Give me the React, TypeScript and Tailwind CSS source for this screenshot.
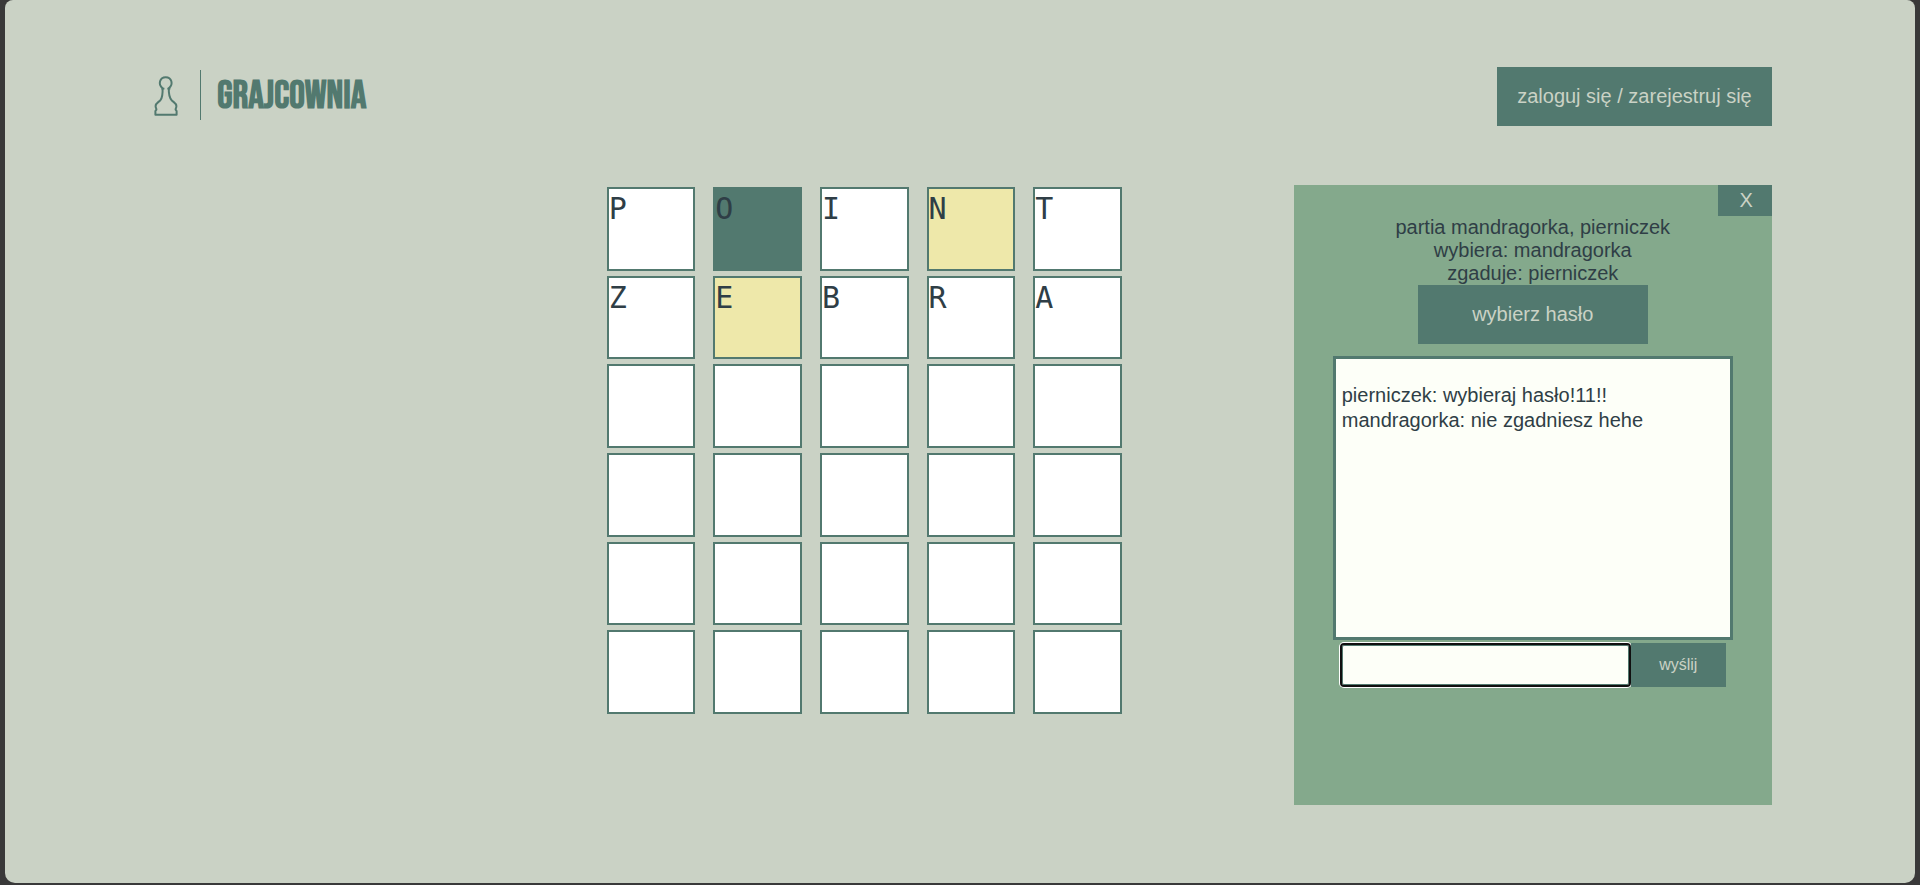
import React from "react";

type Mark = "plain" | "hit" | "near";
type Cell = { letter: string; mark: Mark };

const cell = (letter = "", mark: Mark = "plain"): Cell => ({ letter, mark });

const board: Cell[] = [
  cell("P"), cell("O", "hit"), cell("I"), cell("N", "near"), cell("T"),
  cell("Z"), cell("E", "near"), cell("B"), cell("R"), cell("A"),
  ...Array.from({ length: 20 }, () => cell()),
];

const markClass: Record<Mark, string> = {
  plain: "bg-white",
  hit: "bg-[#52796f]",
  near: "bg-[#eee8aa]",
};

const messages = [
  { author: "pierniczek", text: "wybieraj hasło!11!!" },
  { author: "mandragorka", text: "nie zgadniesz hehe" },
];

function Logo() {
  return (
    <a href="#" className="flex items-center pb-[4px] text-[#52796f]">
      <svg
        className="mt-[2px] ml-[6px] h-[40px] w-[24px]"
        viewBox="0 0 24 40"
        fill="none"
        stroke="currentColor"
        strokeWidth="2"
        strokeLinejoin="round"
        aria-hidden="true"
      >
        <path d="M8.6 12.2 C3.6 8.5 5.8 1.2 11.7 1.2 C17.6 1.2 19.8 8.5 14.8 12.2 C14.6 18 15.5 21.5 17.6 24.2 C20 26.5 22.4 27.5 22.4 30 C22.4 32 21.6 32.2 21.6 33.6 L22.6 35 V38.8 H1.4 V35 L2.4 33.6 C2.4 32.2 1.6 32 1.6 30 C1.6 27.5 4 26.5 6.4 24.2 C8.5 21.5 8.8 18 8.6 12.2 Z" />
        <path d="M7.4 12.6 H10.4 M13.4 12.6 H16.4" strokeWidth="1.6" />
      </svg>
      <span className="ml-[22px] h-[50px] w-px bg-[#52796f]" />
      <span className="ml-[16px] pt-[4px] font-['Bebas_Neue','Liberation_Sans_Narrow','Roboto_Condensed',sans-serif] text-[39px] leading-[44px] font-bold">
        GRAJCOWNIA
      </span>
    </a>
  );
}

function Board() {
  return (
    <div className="grid h-[527px] w-[515px] grid-cols-5 grid-rows-6 gap-x-[18px] gap-y-[5px]">
      {board.map(({ letter, mark }, i) => (
        <div
          key={i}
          className={`border-2 border-[#52796f] font-['DejaVu_Sans_Mono',monospace] text-[30px] leading-[40px] ${markClass[mark]}`}
        >
          {letter}
        </div>
      ))}
    </div>
  );
}

function GamePanel() {
  return (
    <aside className="flex h-[620px] w-[478px] flex-col items-center bg-[#84a98c]">
      <button aria-label="Zamknij" className="h-[31px] w-[54px] self-end bg-[#52796f] pb-px pl-[3px] text-[20px] leading-[23px] text-[#cad2c5]">
        X
      </button>
      <div className="text-center text-[20px] leading-[23px]">
        <p>partia mandragorka, pierniczek</p>
        <p>wybiera: mandragorka</p>
        <p>zgaduje: pierniczek</p>
      </div>
      <button className="h-[59px] w-[230px] bg-[#52796f] text-[20px] leading-[23px] text-[#cad2c5]">
        wybierz hasło
      </button>
      <div className="mt-[12px] h-[284px] w-[400px] border-3 border-[#52796f] bg-[#fdfff8] px-[6px] pt-[24px] text-[20px] leading-[25px]">
        {messages.map((m) => (
          <p key={m.author}>
            {m.author}: {m.text}
          </p>
        ))}
      </div>
      <form className="mt-[3px] flex" onSubmit={(e) => e.preventDefault()}>
        <input
          type="text"
          aria-label="Wiadomość"
          className="h-[44px] w-[291px] rounded-[4px] border-2 border-[#101010] bg-[#fdfff8] px-[8px] text-[20px] shadow-[0_0_0_1px_#ffffff,inset_0_0_0_1px_#52796f] outline-none"
        />
        <button className="relative h-[44px] w-[95px] bg-[#52796f] text-[16px] text-[#cad2c5]">wyślij</button>
      </form>
    </aside>
  );
}

export default function App() {
  return (
    <div className="min-h-screen bg-[#393939] px-[5px] pb-[2px] font-['Liberation_Sans',Arial,sans-serif] text-[#2f3e46]">
      <div className="min-h-[calc(100vh-2px)] rounded-t-[8px] rounded-b-[10px] bg-[#cad2c5] px-[7.5%] pt-[67px] pb-[78px]">
        <header className="flex items-center justify-between">
          <Logo />
          <button className="h-[59px] bg-[#52796f] px-[20px] text-[20px] leading-[23px] text-[#cad2c5]">
            zaloguj się / zarejestruj się
          </button>
        </header>
        <main className="mt-[59px] flex items-start justify-end gap-[172px]">
          <div className="pt-[2px]">
            <Board />
          </div>
          <GamePanel />
        </main>
      </div>
    </div>
  );
}
